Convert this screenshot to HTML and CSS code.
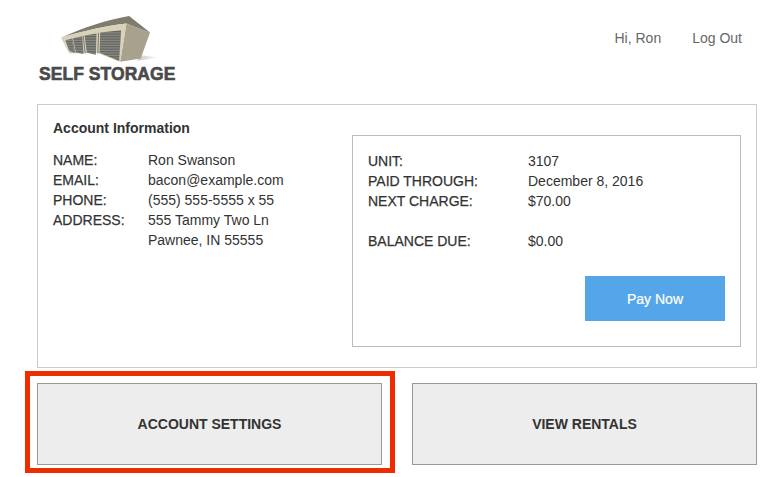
FILE: index.html
```html
<!DOCTYPE html>
<html lang="en">
  <head>
    <meta charset="UTF-8" />
    <title>Self Storage - Account</title>
    <link rel="stylesheet" href="styles.css">
  </head>
  <body>
    <div class="header">
      <div class="logo">
        <svg class="logo-mark" viewBox="125 45 295 140" width="98" height="47" aria-hidden="true">
          <defs>
            <linearGradient id="shadow" x1="0" x2="1" y1="0" y2="0">
              <stop offset="0" stop-color="#c9c9c4" />
              <stop offset="1" stop-color="#ffffff" />
            </linearGradient>
            <pattern id="shutter" width="7" height="5" patternUnits="userSpaceOnUse">
              <rect width="7" height="5" fill="#6f6f6b" />
              <rect y="1" width="7" height="1.4" fill="#a2a29c" />
              <rect y="3.6" width="7" height="1" fill="#4e4e4b" />
            </pattern>
          </defs>
          <path d="M355 182 L420 172 L360 165 Z" fill="url(#shadow)" />
          <path d="M322 70 L393 97 L365 175 L303 185 Z" fill="#a8a18d" />
          <path d="M125 113 C190 82 260 60 330 47 L393 97 L322 70 C260 78 190 92 125 113 Z" fill="#7f7b6d" />
          <path d="M125 113 C190 92 260 78 322 70 L303 185 L232 158 L150 160 Z" fill="#d8d2b9" />
          <path d="M243 97 L306 90 L300 183 L241 158 Z" fill="url(#shutter)" />
          <path d="M196 106 L232 100 L230 164 L203 158 Z" fill="url(#shutter)" />
          <path d="M161 114 L189 108 L193 162 L170 157 Z" fill="url(#shutter)" />
          <path d="M138 120 L157 116 L165 158 L150 153 Z" fill="url(#shutter)" />
          <path d="M238 98 L236 160 M192 107 L198 160 M158 115 L167 158" stroke="#4d4b44" stroke-width="2" fill="none" />
        </svg>
        <div class="logo-text">SELF STORAGE</div>
      </div>
      <div class="user-links">
        <a href="#">Hi, Ron</a>
        <a href="#">Log Out</a>
      </div>
    </div>

    <div class="panel">
      <div class="account">
        <h2>Account Information</h2>
        <div class="rows rows-account">
          <div class="label">NAME:</div>
          <div>Ron Swanson</div>
          <div class="label">EMAIL:</div>
          <div>bacon@example.com</div>
          <div class="label">PHONE:</div>
          <div>(555) 555-5555 x 55</div>
          <div class="label">ADDRESS:</div>
          <div>555 Tammy Two Ln<br />Pawnee, IN 55555</div>
        </div>
      </div>

      <div class="billing">
        <div class="rows rows-billing">
          <div class="label">UNIT:</div>
          <div>3107</div>
          <div class="label">PAID THROUGH:</div>
          <div>December 8, 2016</div>
          <div class="label">NEXT CHARGE:</div>
          <div>$70.00</div>
          <div class="label balance">BALANCE DUE:</div>
          <div class="balance">$0.00</div>
        </div>
        <a class="pay-btn" href="#">Pay Now</a>
      </div>
    </div>

    <div class="actions">
      <div class="action-wrap">
        <a class="action-btn" href="#">ACCOUNT SETTINGS</a>
        <div class="callout"></div>
      </div>
      <div class="action-wrap">
        <a class="action-btn" href="#">VIEW RENTALS</a>
      </div>
    </div>
  </body>
</html>
```

FILE: styles.css
```css
body {
  font-family: "Liberation Sans", Arial, sans-serif;
  font-size: 14px;
  line-height: 20px;
  color: #333;
  margin: 0;
  padding: 0 9px 12px 37px;
  background-color: white;
}
a {
  text-decoration: none;
  color: inherit;
}
.header {
  display: flex;
  justify-content: space-between;
  height: 104px;
}
.logo {
  padding: 15px 0 0 2px;
}
.logo-mark {
  display: block;
  margin-left: 22px;
}
.logo-text {
  margin-top: 3px;
  font-size: 17.5px;
  line-height: 18px;
  font-weight: bold;
  letter-spacing: 0.05px;
  color: #4a4a4a;
  -webkit-text-stroke: 0.6px #4a4a4a;
}
.user-links {
  display: flex;
  gap: 31px;
  padding: 28px 15px 0 0;
  color: #666;
}
.panel {
  display: flex;
  justify-content: space-between;
  box-sizing: border-box;
  height: 264px;
  padding: 13px 15px 20px;
  border: 1px solid #ccc;
}
h2 {
  margin: 0 0 12px;
  font-size: 14px;
  line-height: 20px;
  font-weight: bold;
  color: #333;
}
.rows {
  display: grid;
}
.rows-account {
  grid-template-columns: 95px auto;
}
.rows-billing {
  grid-template-columns: 160px auto;
}
.label {
  -webkit-text-stroke: 0.25px #333;
}
.balance {
  margin-top: 20px;
}
.billing {
  display: flex;
  flex-direction: column;
  box-sizing: border-box;
  width: 389px;
  margin-top: 17px;
  padding: 15px 15px 25px;
  border: 1px solid #bbb;
}
.pay-btn {
  align-self: flex-end;
  width: 140px;
  height: 45px;
  margin-top: auto;
  line-height: 46px;
  text-align: center;
  color: white;
  background-color: #55a6e8;
  -webkit-text-stroke: 0.2px white;
}
.actions {
  display: flex;
  gap: 30px;
  margin-top: 15px;
}
.action-wrap {
  position: relative;
  flex: 1;
}
.action-btn {
  display: block;
  box-sizing: border-box;
  height: 82px;
  line-height: 80px;
  text-align: center;
  font-weight: bold;
  color: #333;
  background-color: #ededed;
  border: 1px solid #999;
}
.callout {
  position: absolute;
  top: -12px;
  left: -12px;
  right: -13px;
  bottom: -8px;
  border: 5px solid #ee2c00;
}
```
